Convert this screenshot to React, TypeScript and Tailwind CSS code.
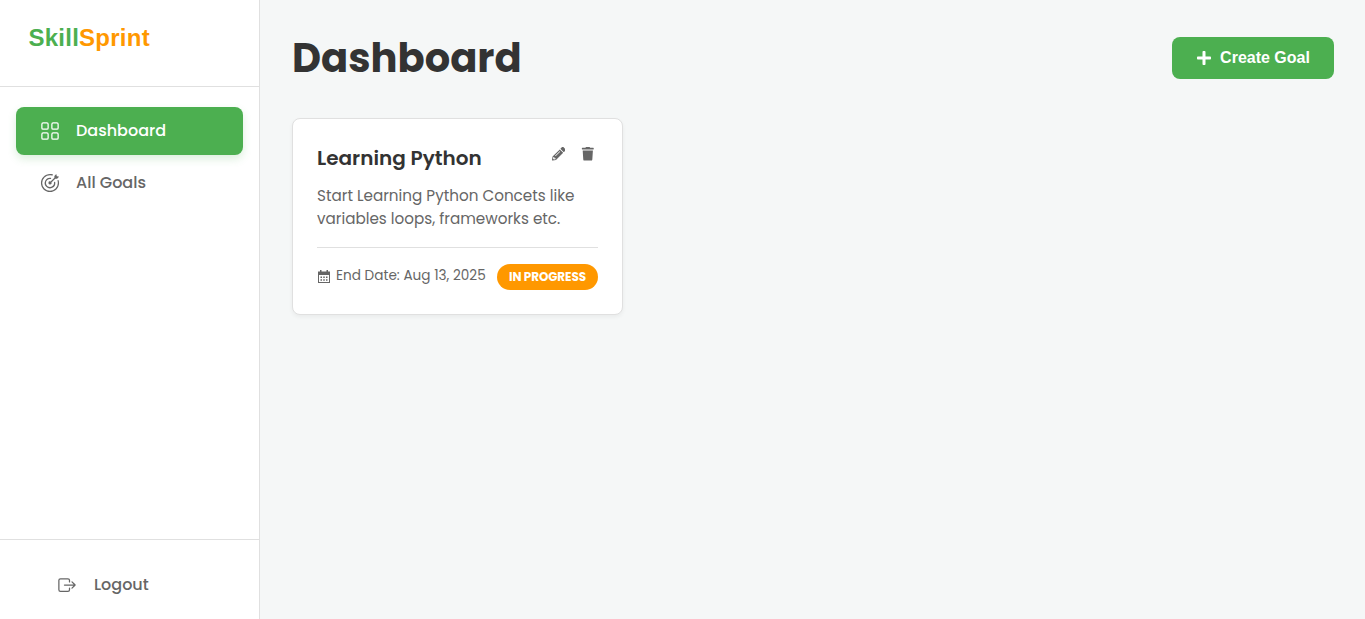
import { BsGrid } from 'react-icons/bs';
import { GoGoal } from 'react-icons/go';
import { IoExitOutline } from 'react-icons/io5';
import { FaPencilAlt, FaPlus, FaTrash } from 'react-icons/fa';

function CalendarIcon() {
  return (
    <svg className="ml-px shrink-0" width="12" height="13" viewBox="0 0 12 13" fill="currentColor" aria-hidden="true">
      <path fillRule="evenodd" d="M2 0h1.5v1.5h5V0H10v1.5h2V13H0V1.5h2zM1 5v7h10V5z" />
      <path d="M2.5 6.5H4V8H2.500zM5.25 6.500h1.5V8h-1.500zM8 6.500h1.500V8H8zM2.500 9.250H4v1.500H2.500zM5.250 9.250h1.500v1.500h-1.500zM8 9.250h1.500v1.500H8z" />
    </svg>
  );
}

export default function App() {
  return (
    <div className="flex h-screen bg-[#f5f7f7] font-[Poppins,'Open_Sans',sans-serif] text-[#333]">
      <aside className="flex w-[260px] shrink-0 flex-col border-r border-[#e0e0e0] bg-white text-[#666]">
        <div className="h-[87px] border-b border-[#e0e0e0] pt-5 pl-[28.5px] font-['Liberation_Sans',Arial,sans-serif] text-[24px] leading-9 font-bold tracking-[0.25px]">
          <span className="text-[#4caf50]">Skill</span>
          <span className="text-[#ff9800]">Sprint</span>
        </div>
        <nav className="flex flex-1 flex-col gap-1 px-4 pt-5 text-base font-medium">
          <a className="flex h-12 items-center gap-4 rounded-lg bg-[#4caf50] px-6 text-white shadow-[0_4px_8px_rgba(76,175,80,0.2)]">
            <BsGrid size={20} />
            Dashboard
          </a>
          <a className="flex h-12 items-center gap-4 rounded-lg px-6">
            <GoGoal size={20} />
            All Goals
          </a>
        </nav>
        <div className="flex h-20 items-center gap-[17px] border-t border-[#e0e0e0] pt-2.5 pl-[57px] text-base font-medium">
          <IoExitOutline size={20} />
          Logout
        </div>
      </aside>
      <main className="flex-1 px-8">
        <header className="mt-7 -mr-px flex h-[60px] items-center justify-between">
          <h1 className="text-[40px] leading-[60px] font-bold">Dashboard</h1>
          <button className="flex h-[42px] w-[162px] items-center justify-center gap-2 rounded-lg bg-[#4caf50] font-['Liberation_Sans',Arial,sans-serif] text-base font-bold text-white">
            <FaPlus size={16} />
            Create Goal
          </button>
        </header>
        <div className="mt-[30px] grid grid-cols-3 gap-6">
          <article className="h-[197px] rounded-lg border border-[#e0e0e0] bg-white px-6 pt-6 shadow-[0_2px_4px_rgba(0,0,0,0.05)]">
            <div className="flex justify-between">
              <h3 className="text-[20px] leading-[30px] font-semibold">Learning Python</h3>
              <div className="flex gap-4 pt-1 pr-[3px] text-[#666]">
                <FaPencilAlt size={13.6} />
                <FaTrash size={13.6} />
              </div>
            </div>
            <p className="mt-[11px] text-[15.2px] leading-[23px] text-[#666]">
              Start Learning Python Concets like variables loops, frameworks etc.
            </p>
            <div className="mt-[17px] flex justify-between border-t border-[#e0e0e0] pt-4">
              <span className="-mt-0.5 flex items-center gap-1.5 text-[13.6px] tracking-[0.02px] text-[#666]">
                <CalendarIcon />
                <span className="whitespace-nowrap">End Date: Aug 13, 2025</span>
              </span>
              <span className="flex h-[26px] items-center rounded-full bg-[#ff9800] px-3 text-[12px] font-bold tracking-[-0.1px] whitespace-nowrap text-white">
                IN PROGRESS
              </span>
            </div>
          </article>
        </div>
      </main>
    </div>
  );
}
